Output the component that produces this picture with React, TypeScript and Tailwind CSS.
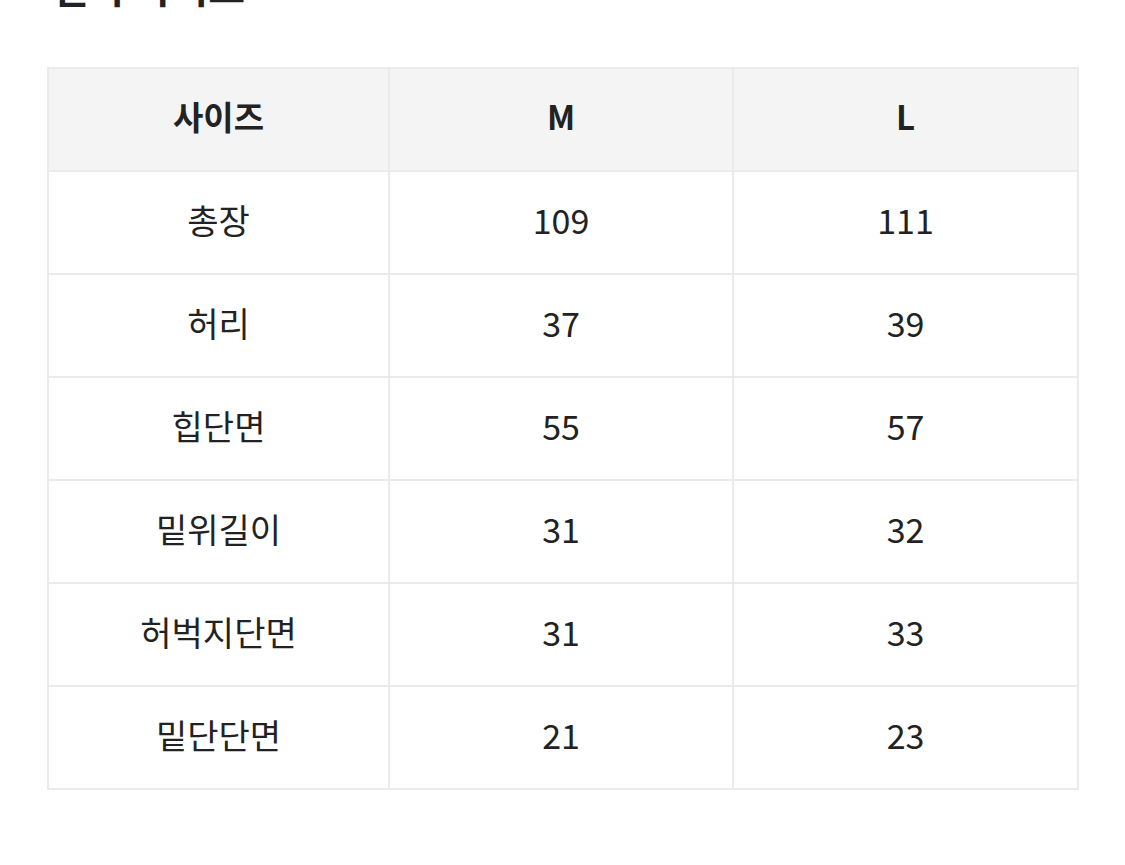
import React from "react"

const rows: [string, string, string][] = [
  ["총장", "109", "111"],
  ["허리", "37", "39"],
  ["힙단면", "55", "57"],
  ["밑위길이", "31", "32"],
  ["허벅지단면", "31", "33"],
  ["밑단단면", "21", "23"],
]

export default function App() {
  return (
    <div
      className="min-h-[865px] w-[1125px] overflow-hidden bg-white text-[#222]"
      style={{ fontFamily: '"Noto Sans CJK KR", "Noto Sans", sans-serif' }}
    >
      <div className="pl-[52px]">
        <h2 className="mt-[-34px] text-[40px] font-bold leading-[40px]">실측 사이즈</h2>
      </div>

      <div className="ml-[47px] mt-[61px] w-[1032px] border-l-2 border-t-2 border-[#ebebeb]">
        <div className="grid grid-cols-[341px_344px_345px] bg-[#f4f4f4]">
          {["사이즈", "M", "L"].map((h) => (
            <div
              key={h}
              className="flex h-[103px] items-center justify-center border-b-2 border-r-2 border-[#ebebeb] pb-[6px] text-[33px] font-bold"
            >
              {h}
            </div>
          ))}
        </div>
        {rows.map((r) => (
          <div key={r[0]} className="grid grid-cols-[341px_344px_345px]">
            {r.map((c, i) => (
              <div
                key={i}
                className="flex h-[103px] items-center justify-center border-b-2 border-r-2 border-[#ebebeb] pb-[6px] text-[34px]"
              >
                {c}
              </div>
            ))}
          </div>
        ))}
      </div>
    </div>
  )
}
